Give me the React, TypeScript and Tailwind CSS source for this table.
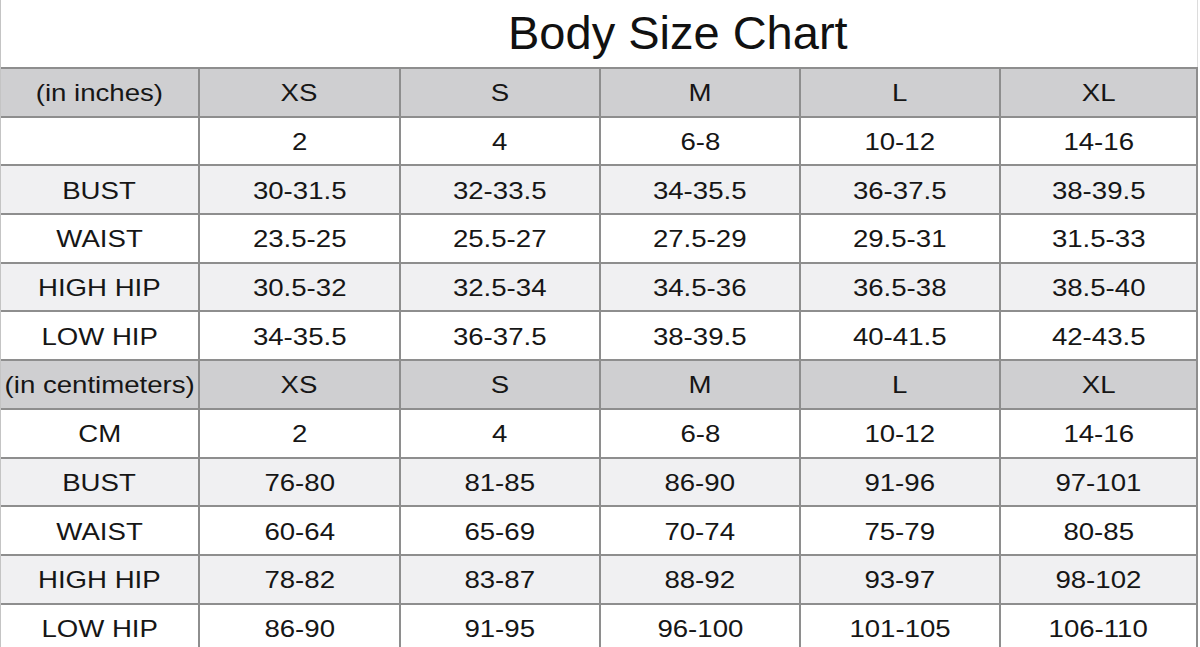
import React from "react";

type Row = { cells: string[]; kind: "head" | "light" | "white" };

const sizes = ["XS", "S", "M", "L", "XL"];

const rows: Row[] = [
  { cells: ["(in inches)", ...sizes], kind: "head" },
  { cells: ["", "2", "4", "6-8", "10-12", "14-16"], kind: "white" },
  { cells: ["BUST", "30-31.5", "32-33.5", "34-35.5", "36-37.5", "38-39.5"], kind: "light" },
  { cells: ["WAIST", "23.5-25", "25.5-27", "27.5-29", "29.5-31", "31.5-33"], kind: "white" },
  { cells: ["HIGH HIP", "30.5-32", "32.5-34", "34.5-36", "36.5-38", "38.5-40"], kind: "light" },
  { cells: ["LOW HIP", "34-35.5", "36-37.5", "38-39.5", "40-41.5", "42-43.5"], kind: "white" },
  { cells: ["(in centimeters)", ...sizes], kind: "head" },
  { cells: ["CM", "2", "4", "6-8", "10-12", "14-16"], kind: "white" },
  { cells: ["BUST", "76-80", "81-85", "86-90", "91-96", "97-101"], kind: "light" },
  { cells: ["WAIST", "60-64", "65-69", "70-74", "75-79", "80-85"], kind: "white" },
  { cells: ["HIGH HIP", "78-82", "83-87", "88-92", "93-97", "98-102"], kind: "light" },
  { cells: ["LOW HIP", "86-90", "91-95", "96-100", "101-105", "106-110"], kind: "white" },
];

const bgFor = (k: Row["kind"]) =>
  k === "head" ? "bg-[#cfcfd1]" : k === "light" ? "bg-[#f0f0f2]" : "bg-white";

export default function App() {
  return (
    <div
      className="w-[1200px] h-[647px] overflow-hidden bg-white text-[#161616]"
      style={{ fontFamily: '"Liberation Sans", Arial, sans-serif' }}
    >
      <div className="w-[1198px] h-full border-l border-[#c4c4c4] flex flex-col">
        <div className="h-[67px] shrink-0 border-r border-[#dcdcdc] pl-[507px] pt-[10px]">
          <div className="text-[47px] leading-[46px] text-[#111111]">Body Size Chart</div>
        </div>
        <div className="grid grid-cols-[197px_199px_198px_198px_198px_195px] auto-rows-[46.7px] gap-[2px] bg-[#8e8e8e] pt-[2px] pr-[2px]">
          {rows.map((r, ri) =>
            r.cells.map((c, ci) => (
              <div
                key={`${ri}-${ci}`}
                className={`${bgFor(r.kind)} flex items-center justify-center overflow-visible whitespace-nowrap`}
              >
                <span className="inline-block text-[24px] leading-none scale-x-[1.15] pt-[2px]">
                  {c}
                </span>
              </div>
            ))
          )}
        </div>
      </div>
    </div>
  );
}
